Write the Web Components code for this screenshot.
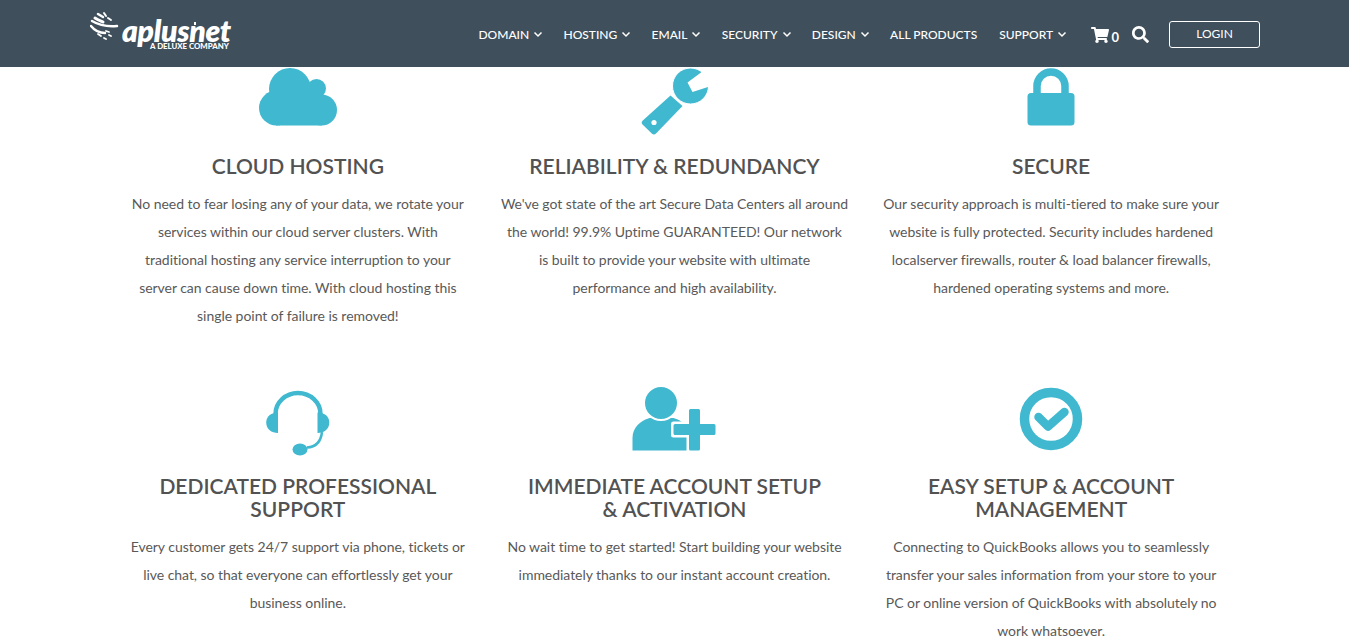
<!DOCTYPE html>
<html lang="en">
<head>
<meta charset="utf-8">
<title>Aplus.net</title>
<style>
  html, body { margin: 0; background: #fff; font-family: Lato, "Liberation Sans", sans-serif; }
</style>
</head>
<body>
<site-header>
  <nav-item>DOMAIN</nav-item>
  <nav-item>HOSTING</nav-item>
  <nav-item>EMAIL</nav-item>
  <nav-item>SECURITY</nav-item>
  <nav-item>DESIGN</nav-item>
  <nav-item plain>ALL PRODUCTS</nav-item>
  <nav-item>SUPPORT</nav-item>
</site-header>

<feature-grid>
  <feature-card heading="CLOUD HOSTING">
    <svg slot="icon" width="78" height="64" viewBox="259 68 78 64" fill="#40b8cf">
      <circle cx="290" cy="89" r="21"/>
      <circle cx="316.500" cy="88.500" r="9.500"/>
      <circle cx="276.500" cy="108" r="17.500"/>
      <circle cx="321.500" cy="110" r="15.500"/>
      <rect x="276" y="100" width="46" height="25.500"/>
      <rect x="300" y="86" width="18" height="18"/>
    </svg>
    No need to fear losing any of your data, we rotate your<br>services within our cloud server clusters. With<br>traditional hosting any service interruption to your<br>server can cause down time. With cloud hosting this<br>single point of failure is removed!
  </feature-card>
  <feature-card heading="RELIABILITY &amp; REDUNDANCY">
    <svg slot="icon" width="68" height="68" viewBox="639.500 68 68 68" overflow="visible" fill="#40b8cf">
      <path d="M670 95.500 682 106 655.500 133.500a3 3 0 0 1-4.200 0l-9-8.700a3 3 0 0 1 0-4.300z"/>
      <circle cx="690" cy="86" r="18" stroke="#fff" stroke-width="1"/>
      <path d="M700.500 72.500 687 82.500 692 92 709 86.500 711 68 701 68z" fill="#fff"/>
      <circle cx="653.500" cy="122.500" r="2.600" fill="#fff"/>
    </svg>
    We've got state of the art Secure Data Centers all around<br>the world! 99.9% Uptime GUARANTEED! Our network<br>is built to provide your website with ultimate<br>performance and high availability.
  </feature-card>
  <feature-card heading="SECURE">
    <svg slot="icon" width="48" height="64" viewBox="1027 68 48 64" fill="#40b8cf">
      <path d="M1037 96V86a14 14 0 0 1 28 0v10" fill="none" stroke="#40b8cf" stroke-width="7.500"/>
      <rect x="1027.500" y="93" width="47" height="32.500" rx="3.500"/>
    </svg>
    Our security approach is multi-tiered to make sure your<br>website is fully protected. Security includes hardened<br>localserver firewalls, router &amp; load balancer firewalls,<br>hardened operating systems and more.
  </feature-card>
  <feature-card heading="DEDICATED PROFESSIONAL SUPPORT">
    <svg slot="icon" width="64" height="68" viewBox="266 388 64 68" fill="#40b8cf">
      <path d="M275.500 414a22.500 21 0 0 1 45 0" fill="none" stroke="#40b8cf" stroke-width="4.500"/>
      <path d="M278 412.500V433c-6.500 0-11.800-4-11.800-10.500S271.500 412.500 278 412.500z"/>
      <path d="M317.500 412.500V433c6.500 0 11.800-4 11.800-10.500S324 412.500 317.500 412.500z"/>
      <path d="M322 432c-1 9-6 15-15 15.500" fill="none" stroke="#40b8cf" stroke-width="2.500"/>
      <ellipse cx="300" cy="449.500" rx="7.500" ry="6"/>
    </svg>
    Every customer gets 24/7 support via phone, tickets or<br>live chat, so that everyone can effortlessly get your<br>business online.
  </feature-card>
  <feature-card heading="IMMEDIATE ACCOUNT SETUP &amp; ACTIVATION">
    <svg slot="icon" width="84" height="64" viewBox="632.500 388 84 64" overflow="visible" fill="#40b8cf">
      <path d="M633 450.500V438c0-11 8-17 17-20h24c8 2 13 7 13 16v16.500z"/>
      <circle cx="661.500" cy="403" r="17" stroke="#fff" stroke-width="2"/>
      <path d="M690 410h10v14h16v11h-16v15.500h-10V435h-16v-11h16z" stroke="#fff" stroke-width="5" stroke-linejoin="round"/>
      <path d="M691 409h8a1.500 1.500 0 0 1 1.500 1.500V424h14a1.500 1.500 0 0 1 1.500 1.500v8a1.500 1.500 0 0 1-1.500 1.500h-14v14a1.500 1.500 0 0 1-1.500 1.500h-8a1.500 1.500 0 0 1-1.500-1.500V435h-14a1.500 1.500 0 0 1-1.500-1.500v-8a1.500 1.500 0 0 1 1.500-1.500h14v-13.500A1.500 1.500 0 0 1 691 409z"/>
    </svg>
    No wait time to get started! Start building your website<br>immediately thanks to our instant account creation.
  </feature-card>
  <feature-card heading="EASY SETUP &amp; ACCOUNT MANAGEMENT">
    <svg slot="icon" width="64" height="64" viewBox="1019 388 64 64" overflow="visible" fill="none" stroke="#40b8cf">
      <circle cx="1051" cy="419" r="26.500" stroke-width="9.500"/>
      <polyline points="1038.500,417 1048,426.500 1064.500,412" stroke-width="8.500" stroke-linecap="round" stroke-linejoin="round"/>
    </svg>
    Connecting to QuickBooks allows you to seamlessly<br>transfer your sales information from your store to your<br>PC or online version of QuickBooks with absolutely no<br>work whatsoever.
  </feature-card>
</feature-grid>

<script>
const html = String.raw;

class SiteHeader extends HTMLElement {
  constructor() {
    super();
    this.attachShadow({ mode: "open" });
    this.shadowRoot.innerHTML = html`
      <style>
        :host {
          display: flex;
          align-items: center;
          height: 67px;
          padding: 0 89px;
          background: #3f4f5b;
          color: #fff;
        }
        .logo { display: flex; align-items: flex-start; width: 142px; height: 40px; margin-top: -6px; margin-left: 1px; }
        .wordmark { position: relative; display: flex; flex-direction: column; align-items: flex-end; margin: 8px 0 0 3px; }
        .name { font: italic 800 30px/22px Lato, sans-serif; letter-spacing: -0.3px; }
        .tag { font: 900 7.800px/9px Lato, sans-serif; margin: 1px 2px 0 0; white-space: nowrap; }
        .tick { position: absolute; left: 72px; top: 3px; width: 2px; height: 3px; background: #fff; }
        nav { display: flex; align-items: center; gap: 20.300px; margin-left: auto; padding-top: 2px; }
        .cart { display: flex; align-items: center; margin-left: 4px; font: 700 13px Lato, sans-serif; gap: 2px; }
        .cart span { margin-top: 4px; }
        .search { display: block; margin-left: -7.300px; }
        button {
          width: 91px;
          height: 27px;
          margin: 0 0 0 -0.300px;
          border: 1px solid #fff;
          border-radius: 3px;
          background: none;
          color: #fff;
          font: 400 12px Lato, sans-serif;
          padding: 0 0 2px;
        }
      </style>
      <div class="logo">
        <svg width="29" height="32" viewBox="0 0 29 32" fill="none" stroke="#fff" stroke-linecap="round">
          <path d="M2 10c5 3 14 6 25 5" stroke-width="2.500"/>
          <path d="M1 15c4 5 10 7 14 7" stroke-width="2.500"/>
          <path d="M5 7c3 2 6 3 8 4" stroke-width="3"/>
          <path d="M8 3l5 3" stroke-width="2.500"/>
          <path d="M14 2l2 3M18 7l3 2" stroke-width="2"/>
          <path d="M8 23l3 2M14 27l2 1M19 24l2 1M16 20l3 1" stroke-width="1.800"/>
        </svg>
        <div class="wordmark">
          <div class="name">aplusnet</div>
          <div class="tag">A DELUXE COMPANY</div>
          <div class="tick"></div>
        </div>
      </div>
      <nav>
        <slot></slot>
        <div class="cart">
          <svg width="18" height="16" viewBox="0 0 576 512" fill="#fff"><path d="M528.12 301.319l47.273-208C578.806 78.301 567.391 64 551.99 64H159.208l-9.166-44.81C147.758 8.021 137.93 0 126.529 0H24C10.745 0 0 10.745 0 24v16c0 13.255 10.745 24 24 24h69.883l70.248 343.435C147.325 417.1 136 435.222 136 456c0 30.928 25.072 56 56 56s56-25.072 56-56c0-15.674-6.447-29.835-16.824-40h209.647C430.447 426.165 424 440.326 424 456c0 30.928 25.072 56 56 56s56-25.072 56-56c0-22.172-12.888-41.332-31.579-50.405l5.517-24.276c3.413-15.018-8.002-29.319-23.403-29.319H218.117l-6.545-32h293.145c11.206 0 20.92-7.754 23.403-18.681z"/></svg>
          <span>0</span>
        </div>
        <svg class="search" width="17" height="17" viewBox="0 0 512 512" fill="#fff"><path d="M505 442.700L405.300 343c-4.500-4.500-10.600-7-17-7H372c27.600-35.300 44-79.700 44-128C416 93.100 322.900 0 208 0S0 93.100 0 208s93.100 208 208 208c48.300 0 92.700-16.400 128-44v16.300c0 6.400 2.500 12.500 7 17l99.700 99.700c9.400 9.400 24.600 9.400 33.900 0l28.300-28.300c9.400-9.400 9.400-24.600.1-34zM208 336c-70.700 0-128-57.200-128-128 0-70.700 57.200-128 128-128 70.700 0 128 57.200 128 128 0 70.700-57.200 128-128 128z"/></svg>
        <button>LOGIN</button>
      </nav>
    `;
  }
}

class NavItem extends HTMLElement {
  constructor() {
    super();
    this.attachShadow({ mode: "open" });
    this.shadowRoot.innerHTML = html`
      <style>
        :host {
          display: flex;
          align-items: center;
          gap: 4px;
          font: 500 12px Lato, sans-serif;
          color: #fff;
          white-space: nowrap;
        }
        :host([plain]) { margin-right: 1.700px; }
        :host([plain]) svg { display: none; }
      </style>
      <slot></slot>
      <svg width="10" height="7" viewBox="0 0 10 7" fill="none" stroke="#fff" stroke-width="1.500">
        <polyline points="1.500,1.500 5,5 8.500,1.500"/>
      </svg>
    `;
  }
}

class FeatureGrid extends HTMLElement {
  constructor() {
    super();
    this.attachShadow({ mode: "open" });
    this.shadowRoot.innerHTML = html`
      <style>
        :host {
          display: grid;
          grid-template-columns: repeat(3, 1fr);
          row-gap: 58px;
          width: 1130px;
          margin: 1px auto 0;
        }
      </style>
      <slot></slot>
    `;
  }
}

class FeatureCard extends HTMLElement {
  static get observedAttributes() {
    return ["heading"];
  }

  constructor() {
    super();
    this.attachShadow({ mode: "open" });
    this.shadowRoot.innerHTML = html`
      <style>
        :host {
          display: flex;
          flex-direction: column;
          align-items: center;
          padding: 0 14px;
          text-align: center;
          color: #595959;
        }
        .icon { display: flex; align-items: flex-start; height: 64px; }
        h3 {
          max-width: 310px;
          margin: 22px 0 13px;
          font: 600 21px/23px Lato, sans-serif;
          color: #525252;
        }
        p { margin: 0; font: 400 14px/28px Lato, sans-serif; letter-spacing: -0.04px; white-space: nowrap; }
      </style>
      <div class="icon"><slot name="icon"></slot></div>
      <h3 id="heading"></h3>
      <p><slot></slot></p>
    `;
  }

  attributeChangedCallback(name, _oldValue, newValue) {
    if (name === "heading") this.shadowRoot.getElementById("heading").textContent = newValue;
  }
}

customElements.define("site-header", SiteHeader);
customElements.define("nav-item", NavItem);
customElements.define("feature-grid", FeatureGrid);
customElements.define("feature-card", FeatureCard);
</script>
</body>
</html>
